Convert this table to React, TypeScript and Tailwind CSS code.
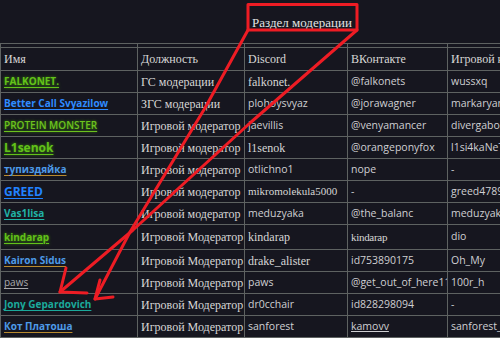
import React from 'react';

type Row = {
  name: string;
  nameCls: string;
  role: string;
  discord: string;
  discordFont?: 'serif' | 'small';
  vk: string;
  vkSerif?: boolean;
  vkLink?: boolean;
  game: string;
  tall?: boolean;
};

const glowGreen = 'text-[#62c21a] font-bold [text-shadow:0_0_3px_#3f8a0c] decoration-[#62c21a]';
const blueGold = 'text-[#4d9ae8] font-bold decoration-[#b98a2e]';

const rows: Row[] = [
  { name: 'FALKONET.', nameCls: glowGreen, role: 'ГС модерации', discord: 'falkonet.', discordFont: 'serif', vk: '@falkonets', game: 'wussxq' },
  { name: 'Better Call Svyazilow', nameCls: 'text-[#2f8bff] font-bold decoration-[#2f8bff]', role: 'ЗГС модерации', discord: 'plohoysvyaz', vk: '@jorawagner', game: 'markaryan' },
  { name: 'PROTEIN MONSTER', nameCls: 'text-[#6cc21e] font-semibold [text-shadow:0_0_3px_#3f8a0c] decoration-[#6cc21e]', role: 'Игровой модератор', discord: 'jaevillis', vk: '@venyamancer', game: 'divergabo' },
  { name: 'L1senok', nameCls: glowGreen + ' text-[12px]', role: 'Игровой модератор', discord: 'l1senok', discordFont: 'serif', vk: '@orangeponyfox', game: 'l1si4kaNeTrogai' },
  { name: 'тупиздяйка', nameCls: blueGold, role: 'Игровой модератор', discord: 'otlichno1', vk: 'nope', game: '-' },
  { name: 'GREED', nameCls: 'text-[#2283ff] font-bold text-[12px] decoration-[#2283ff]', role: 'Игровой модератор', discord: 'mikromolekula5000', discordFont: 'small', vk: '-', game: 'greed4789' },
  { name: 'Vas1lisa', nameCls: 'text-[#20b2a6] font-bold decoration-[#20b2a6]', role: 'Игровой модератор', discord: 'meduzyaka', vk: '@the_balanc', game: 'meduzyaka_' },
  { name: 'kindarap', nameCls: glowGreen, role: 'Игровой Модератор', discord: 'kindarap', discordFont: 'serif', vk: 'kindarap', vkSerif: true, game: 'dio', tall: true },
  { name: 'Kairon Sidus', nameCls: blueGold, role: 'Игровой Модератор', discord: 'drake_alister', discordFont: 'serif', vk: 'id753890175', game: 'Oh_My' },
  { name: 'paws', nameCls: 'text-[#a9a9ad] font-normal decoration-[#a9a9ad]', role: 'Игровой Модератор', discord: 'paws', vk: '@get_out_of_here11', game: '100r_h' },
  { name: 'Jony Gepardovich', nameCls: 'text-[#1ba99b] font-bold decoration-[#1ba99b]', role: 'Игровой Модератор', discord: 'dr0cchair', vk: 'id828298094', game: '-' },
  { name: 'Кот Платоша', nameCls: blueGold, role: 'Игровой Модератор', discord: 'sanforest', vk: 'kamovv', vkLink: true, game: 'sanforest_pl' },
];

const cell = 'border-r border-b border-[#5e6261] px-[3px] flex items-center whitespace-nowrap overflow-hidden';
const serif = "font-['Liberation_Serif',serif] text-[12px] text-[#d6d6d6]";
const serifSmall = "font-['Liberation_Serif',serif] text-[11px] text-[#d6d6d6]";
const sans = "font-['Open_Sans',sans-serif] text-[10.5px] text-[#cfcfd2]";

export default function App() {
  return (
    <div className="relative w-[500px] h-[338px] overflow-hidden bg-[#16161f]">
      {/* Title */}
      <div className="h-[43px] pl-[252px] pt-[9px]">
        <span className="font-['Liberation_Serif',serif] text-[13px] text-[#e2e2e2]">Раздел модерации</span>
      </div>

      {/* Table */}
      <div className="w-[570px] border-t border-l border-[#5e6261] grid grid-cols-[137px_107px_103px_100px_120px]">
        {[0, 1, 2, 3, 4].map((i) => (
          <div key={i} className="h-[4px] border-r border-b border-[#5e6261]" />
        ))}
        {['Имя', 'Должность', 'Discord', 'ВКонтакте', 'Игровой никнейм'].map((h) => (
          <div key={h} className={`${cell} h-[23px] ${serif}`}>{h}</div>
        ))}
        {rows.map((r) => {
          const h = r.tall ? 'h-[25px]' : 'h-[22px]';
          const dFont = r.discordFont === 'serif' ? serif : r.discordFont === 'small' ? serifSmall : sans;
          return (
            <React.Fragment key={r.name}>
              <div className={`${cell} ${h}`}>
                <span className={`font-['Open_Sans',sans-serif] text-[10px] underline underline-offset-2 ${r.nameCls}`}>{r.name}</span>
              </div>
              <div className={`${cell} ${h} ${serif}`}>{r.role}</div>
              <div className={`${cell} ${h} ${dFont}`}>{r.discord}</div>
              <div className={`${cell} ${h} ${r.vkSerif ? serifSmall + ' tracking-[-0.3px]' : sans}`}>
                <span className={r.vkLink ? 'underline decoration-[#cfcfd2]' : ''}>{r.vk}</span>
              </div>
              <div className={`${cell} ${h} ${sans}`}>{r.game}</div>
            </React.Fragment>
          );
        })}
      </div>

      {/* Red annotation drawn over the screenshot */}
      <svg className="absolute inset-0 pointer-events-none" width="500" height="338" viewBox="0 0 500 338">
        <g fill="none" stroke="#ee1c24" strokeWidth="3" strokeLinecap="round" strokeLinejoin="round">
          <rect x="248" y="4.5" width="109" height="25.5" />
          <path d="M248 30 L205 108 L130 232 L95 299" />
          <path d="M357 30 L250 123 L133 230 L60 292" />
          <path d="M66 268 L60 292 L87 293" />
          <path d="M100 280 L95 299 L113 297" />
        </g>
      </svg>
    </div>
  );
}
